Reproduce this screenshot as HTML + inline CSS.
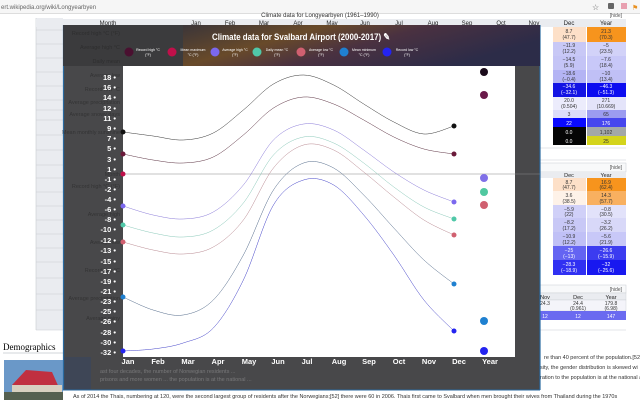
<!DOCTYPE html>
<html><head><meta charset="utf-8"><style>
html,body{margin:0;padding:0;width:640px;height:400px;overflow:hidden;background:#fff;font-family:"Liberation Sans",sans-serif}
svg{display:block}
</style></head><body>
<svg id="s" width="640" height="400" viewBox="0 0 640 400" xmlns="http://www.w3.org/2000/svg" font-family="Liberation Sans, sans-serif">
<rect x="0" y="0" width="640" height="13" fill="#f6f6f6"/>
<text x="1" y="9" font-size="6" fill="#666">ert.wikipedia.org/wiki/Longyearbyen</text>
<text x="592" y="10" font-size="8" fill="#555">☆</text>
<rect x="608" y="3" width="6" height="6" rx="1" fill="#666"/>
<rect x="621" y="3" width="6" height="6" fill="#e8a0b0"/>
<text x="632" y="10" font-size="7" fill="#e89020">⚑</text>
<rect x="0" y="13" width="640" height="1" fill="#ddd"/>
<rect x="36" y="18" width="27" height="312" fill="#eaecf0"/>
<g stroke="#c8ccd1" stroke-width="0.6">
<line x1="36" y1="18" x2="36" y2="330"/>
<line x1="36" y1="30" x2="63" y2="30"/><line x1="36" y1="44" x2="63" y2="44"/><line x1="36" y1="58" x2="63" y2="58"/><line x1="36" y1="72" x2="63" y2="72"/><line x1="36" y1="86" x2="63" y2="86"/><line x1="36" y1="100" x2="63" y2="100"/><line x1="36" y1="110" x2="63" y2="110"/><line x1="36" y1="120" x2="63" y2="120"/><line x1="36" y1="135" x2="63" y2="135"/><line x1="36" y1="150" x2="63" y2="150"/><line x1="36" y1="165" x2="63" y2="165"/><line x1="36" y1="178" x2="63" y2="178"/><line x1="36" y1="192" x2="63" y2="192"/><line x1="36" y1="206" x2="63" y2="206"/><line x1="36" y1="220" x2="63" y2="220"/><line x1="36" y1="234" x2="63" y2="234"/><line x1="36" y1="248" x2="63" y2="248"/><line x1="36" y1="262" x2="63" y2="262"/><line x1="36" y1="278" x2="63" y2="278"/><line x1="36" y1="294" x2="63" y2="294"/><line x1="36" y1="310" x2="63" y2="310"/><line x1="36" y1="330" x2="63" y2="330"/>
</g>
<text x="320" y="17" font-size="6" fill="#333" text-anchor="middle">Climate data for Longyearbyen (1961–1990)</text>
<rect x="36" y="19" width="590" height="8" fill="#eaecf0"/>
<g font-size="6" fill="#222" text-anchor="middle"><text x="108" y="25">Month</text><text x="196" y="25">Jan</text><text x="230" y="25">Feb</text><text x="264" y="25">Mar</text><text x="298" y="25">Apr</text><text x="332" y="25">May</text><text x="365" y="25">Jun</text><text x="399" y="25">Jul</text><text x="433" y="25">Aug</text><text x="467" y="25">Sep</text><text x="501" y="25">Oct</text><text x="534" y="25">Nov</text><text x="569" y="25">Dec</text><text x="606" y="25">Year</text></g>
<text x="622" y="17" font-size="5" fill="#555" text-anchor="end">[hide]</text>
<g>
<rect x="553" y="27" width="33" height="15" fill="#fde0c8"/><rect x="587" y="27" width="39" height="15" fill="#f7941d"/>
<rect x="553" y="42" width="33" height="14" fill="#c8c8f6"/><rect x="587" y="42" width="39" height="14" fill="#d2d2f8"/>
<rect x="553" y="56" width="33" height="14" fill="#c4c4f6"/><rect x="587" y="56" width="39" height="14" fill="#c8c8f8"/>
<rect x="553" y="70" width="33" height="13" fill="#b4b4f4"/><rect x="587" y="70" width="39" height="13" fill="#c0c0f6"/>
<rect x="553" y="83" width="33" height="14" fill="#1414e4"/><rect x="587" y="83" width="39" height="14" fill="#0c0cf0"/>
<rect x="553" y="97" width="33" height="13" fill="#ececfc"/><rect x="587" y="97" width="39" height="13" fill="#e4e4fa"/>
<rect x="553" y="110" width="33" height="8" fill="#dcdcfa"/><rect x="587" y="110" width="39" height="8" fill="#9c9cf0"/>
<rect x="553" y="118" width="33" height="9" fill="#0a0aff"/><rect x="587" y="118" width="39" height="9" fill="#4646ee"/>
<rect x="553" y="127" width="33" height="9" fill="#050505"/><rect x="587" y="127" width="39" height="9" fill="#a3a8a8"/>
<rect x="553" y="136" width="33" height="9" fill="#050505"/><rect x="587" y="136" width="39" height="9" fill="#d4d41c"/>
</g>
<g font-size="5" text-anchor="middle" fill="#333">
<text x="569" y="33">8.7</text><text x="569" y="39">(47.7)</text><text x="606" y="33">21.3</text><text x="606" y="39">(70.3)</text>
<text x="569" y="47">−11.9</text><text x="569" y="53">(12.2)</text><text x="606" y="47">−5</text><text x="606" y="53">(23.5)</text>
<text x="569" y="61">−14.5</text><text x="569" y="67">(5.9)</text><text x="606" y="61">−7.6</text><text x="606" y="67">(18.4)</text>
<text x="569" y="75">−18.6</text><text x="569" y="81">(−0.4)</text><text x="606" y="75">−10</text><text x="606" y="81">(13.4)</text>
<text x="569" y="88" fill="#fff">−34.6</text><text x="569" y="94" fill="#fff">(−32.1)</text><text x="606" y="88" fill="#fff">−46.3</text><text x="606" y="94" fill="#fff">(−51.3)</text>
<text x="569" y="102">20.0</text><text x="569" y="108">(0.504)</text><text x="606" y="102">271</text><text x="606" y="108">(10.669)</text>
<text x="569" y="116">3</text><text x="606" y="116">65</text>
<text x="569" y="125" fill="#fff">22</text><text x="606" y="125" fill="#fff">176</text>
<text x="569" y="134" fill="#fff">0.0</text><text x="606" y="134">1,102</text>
<text x="569" y="143" fill="#fff">0.0</text><text x="606" y="143">25</text>
</g>
<line x1="540" y1="148" x2="626" y2="148" stroke="#c8ccd1" stroke-width="0.6"/>
<line x1="540" y1="160" x2="626" y2="160" stroke="#c8ccd1" stroke-width="0.6"/>
<rect x="540" y="163" width="86" height="9" fill="#f8f9fa" stroke="#c8ccd1" stroke-width="0.5"/>
<text x="622" y="169" font-size="5" fill="#555" text-anchor="end">[hide]</text>
<rect x="540" y="172" width="86" height="6" fill="#eaecf0"/>
<g font-size="5.5" text-anchor="middle" fill="#222"><text x="569" y="177">Dec</text><text x="606" y="177">Year</text></g>
<g>
<rect x="553" y="178" width="33" height="13" fill="#fde0c8"/><rect x="587" y="178" width="39" height="13" fill="#f7941d"/>
<rect x="553" y="191" width="33" height="14" fill="#fef2e8"/><rect x="587" y="191" width="39" height="14" fill="#f8b060"/>
<rect x="553" y="205" width="33" height="13" fill="#d0d0f8"/><rect x="587" y="205" width="39" height="13" fill="#e2e2fa"/>
<rect x="553" y="218" width="33" height="14" fill="#c8c8f6"/><rect x="587" y="218" width="39" height="14" fill="#d8d8f8"/>
<rect x="553" y="232" width="33" height="14" fill="#c0c0f6"/><rect x="587" y="232" width="39" height="14" fill="#c8c8f8"/>
<rect x="553" y="246" width="33" height="14" fill="#6464f2"/><rect x="587" y="246" width="39" height="14" fill="#3c3cf0"/>
<rect x="553" y="260" width="33" height="15" fill="#3030f2"/><rect x="587" y="260" width="39" height="15" fill="#1818f0"/>
</g>
<g font-size="5" text-anchor="middle" fill="#333">
<text x="569" y="184">8.7</text><text x="569" y="189">(47.7)</text><text x="606" y="184">16.9</text><text x="606" y="189">(62.4)</text>
<text x="569" y="197">3.6</text><text x="569" y="203">(38.5)</text><text x="606" y="197">14.3</text><text x="606" y="203">(57.7)</text>
<text x="569" y="211">−5.9</text><text x="569" y="216">(22)</text><text x="606" y="211">−0.8</text><text x="606" y="216">(30.5)</text>
<text x="569" y="224">−8.2</text><text x="569" y="230">(17.2)</text><text x="606" y="224">−3.2</text><text x="606" y="230">(26.2)</text>
<text x="569" y="238">−10.9</text><text x="569" y="244">(12.2)</text><text x="606" y="238">−5.6</text><text x="606" y="244">(21.9)</text>
<text x="569" y="252" fill="#fff">−25</text><text x="569" y="258" fill="#fff">(−13)</text><text x="606" y="252" fill="#fff">−26.6</text><text x="606" y="258" fill="#fff">(−15.9)</text>
<text x="569" y="266" fill="#fff">−28.3</text><text x="569" y="272" fill="#fff">(−18.9)</text><text x="606" y="266" fill="#fff">−32</text><text x="606" y="272" fill="#fff">(−25.6)</text>
</g>
<rect x="540" y="285" width="86" height="8" fill="#f8f9fa" stroke="#c8ccd1" stroke-width="0.5"/>
<text x="622" y="291" font-size="5" fill="#555" text-anchor="end">[hide]</text>
<rect x="540" y="293" width="86" height="7" fill="#eaecf0" stroke="#c8ccd1" stroke-width="0.4"/>
<g font-size="5.5" text-anchor="middle" fill="#222"><text x="545" y="299">Nov</text><text x="578" y="299">Dec</text><text x="611" y="299">Year</text></g>
<rect x="540" y="300" width="86" height="11" fill="#f4f4fa" stroke="#c8ccd1" stroke-width="0.4"/>
<g font-size="5" text-anchor="middle" fill="#333"><text x="545" y="305">24.3</text><text x="578" y="305">24.4</text><text x="611" y="305">179.8</text><text x="578" y="310">(0.961)</text><text x="611" y="310">(6.98)</text></g>
<rect x="540" y="311" width="86" height="9" fill="#6a6af0"/>
<g font-size="5" text-anchor="middle" fill="#fff"><text x="545" y="318">12</text><text x="578" y="318">12</text><text x="611" y="318">147</text></g>
<line x1="540" y1="330" x2="626" y2="330" stroke="#c8ccd1" stroke-width="0.6"/>
<text x="3" y="350" font-family="Liberation Serif, serif" font-size="9" fill="#000">Demographics</text>
<line x1="3" y1="353" x2="63" y2="353" stroke="#a2a9b1" stroke-width="0.5"/>
<rect x="4" y="360" width="59" height="40" fill="#6a98c8"/>
<polygon points="12,385 26,370 52,372 60,390 12,395" fill="#c03040"/>
<rect x="12" y="385" width="50" height="15" fill="#d8d0c0"/>
<rect x="4" y="392" width="59" height="8" fill="#556050"/>
<g font-size="5.5" fill="#333">
<text x="544" y="359">re than 40 percent of the population.[52] is</text>
<text x="540" y="369">sity, the gender distribution is skewed wi</text>
<text x="540" y="379">ration to the population is at the national a</text>
<text x="73" y="398">As of 2014 the Thais, numbering at 120, were the second largest group of residents after the Norwegians;[52] there were 60 in 2006. Thais first came to Svalbard when men brought their wives from Thailand during the 1970s</text>
</g>
<rect x="63" y="25" width="477" height="365" fill="#3a3a3c" fill-opacity="0.93"/>
<rect x="63" y="357" width="28" height="33" fill="#3e4656"/>
<line x1="63.5" y1="25" x2="63.5" y2="390" stroke="#2a6aa0" stroke-width="1.2"/>
<line x1="540" y1="25" x2="540" y2="390" stroke="#2a6aa0" stroke-width="1.2"/>
<line x1="63" y1="390" x2="540" y2="390" stroke="#2a6aa0" stroke-width="1"/>
<defs><linearGradient id="hg" x1="0" y1="0" x2="1" y2="0.4"><stop offset="0" stop-color="#3a3438"/><stop offset="0.35" stop-color="#6a4a28"/><stop offset="0.6" stop-color="#4a3040"/><stop offset="1" stop-color="#2a2a48"/></linearGradient></defs>
<rect x="183" y="25" width="357" height="41" fill="url(#hg)" opacity="0.95"/>
<rect x="63" y="25" width="120" height="41" fill="#3a3a3c" opacity="0.9"/>
<text x="212" y="40" font-size="9.5" font-weight="bold" fill="#fff" textLength="178" lengthAdjust="spacingAndGlyphs">Climate data for Svalbard Airport (2000-2017) ✎</text>
<g font-size="5.5" fill="#222" fill-opacity="0.55" text-anchor="end">
<text x="120" y="35">Record high °C (°F)</text><text x="120" y="49">Average high °C</text><text x="120" y="63">Daily mean</text><text x="120" y="77">Average low</text><text x="120" y="91">Record low °C</text><text x="120" y="104">Average precipitation</text><text x="120" y="116">Average snowy days</text><text x="120" y="134">Mean monthly sunshine</text><text x="120" y="176">Month</text><text x="120" y="188">Record high °C (°F)</text><text x="120" y="216">Average high</text><text x="120" y="244">Average low</text><text x="120" y="272">Record low °C</text><text x="120" y="300">Average precipitation</text><text x="120" y="320">Average rainy</text>
</g>
<g font-size="3.5" fill="#fff" text-anchor="middle">
<circle cx="129" cy="52" r="4.5" fill="#4a1030"/><text x="148" y="51">Record high °C</text><text x="148" y="56">(°F)</text>
<circle cx="172" cy="52" r="4.5" fill="#c0104a"/><text x="193" y="51">Mean maximum</text><text x="193" y="56">°C (°F)</text>
<circle cx="215" cy="52" r="4.5" fill="#7b68ee"/><text x="235" y="51">Average high °C</text><text x="235" y="56">(°F)</text>
<circle cx="257" cy="52" r="4.5" fill="#50c8a8"/><text x="277" y="51">Daily mean °C</text><text x="277" y="56">(°F)</text>
<circle cx="301" cy="52" r="4.5" fill="#d06070"/><text x="321" y="51">Average low °C</text><text x="321" y="56">(°F)</text>
<circle cx="344" cy="52" r="4.5" fill="#1f80d0"/><text x="364" y="51">Mean minimum</text><text x="364" y="56">°C (°F)</text>
<circle cx="387" cy="52" r="4.5" fill="#2424f0"/><text x="407" y="51">Record low °C</text><text x="407" y="56">(°F)</text>
</g>
<rect x="123" y="66" width="392" height="291" fill="#fff"/>
<line x1="123" y1="174" x2="540" y2="174" stroke="#888" stroke-width="0.6"/>
<g id="curves" fill="none" stroke-width="0.5"></g>
<g id="yl" font-size="7.5" font-weight="bold" fill="#fff" text-anchor="end"></g>
<g font-size="7.5" font-weight="bold" fill="#fff" text-anchor="middle">
<text x="128" y="364">Jan</text><text x="158" y="364">Feb</text><text x="188" y="364">Mar</text><text x="218" y="364">Apr</text><text x="249" y="364">May</text><text x="278" y="364">Jun</text><text x="307" y="364">Jul</text><text x="339" y="364">Aug</text><text x="369" y="364">Sep</text><text x="399" y="364">Oct</text><text x="429" y="364">Nov</text><text x="459" y="364">Dec</text><text x="490" y="364">Year</text>
</g>
<g font-size="5.5" fill="#fff" fill-opacity="0.25"><text x="100" y="373">ast four decades, the number of Norwegian residents ...</text><text x="100" y="381">prisons  and  more  women ... the population is at the national ...</text></g>
</svg>
<script>
var ns="http://www.w3.org/2000/svg";
var data=[
["#333",[132,136,140,133,110,84,75,85,104,122,134,126],"#111",72,"#1a0a1a"],
["#5a3040",[154,160,163,157,135,108,97,104,120,137,149,154],"#6a1a3a",95,"#6a1a4a"],
["#8878d8",[206,215,219,212,185,140,124,130,150,172,190,202],"#7b68ee",178,"#8070e8"],
["#88c8b8",[225,233,237,230,203,155,137,143,163,187,207,219],"#50c8a8",192,"#50c8a0"],
["#b88890",[242,250,254,247,220,168,145,150,172,197,220,235],"#d06070",205,"#d06070"],
["#506888",[297,310,315,300,255,190,163,168,195,228,260,284],"#1f80d0",321,"#1f80d0"],
["#4040c8",[351,349,343,328,280,205,180,185,215,255,300,331],"#2424f0",351,"#2424f0"]];
var g=document.getElementById("curves");
function X(i){return 123+i*(454-123)/11;}
data.forEach(function(d){
 var p=d[1].map(function(y,i){return [X(i),y];});
 var s="M"+p[0][0]+","+p[0][1];
 for(var i=0;i<p.length-1;i++){
  var p0=p[i-1]||p[i],p1=p[i],p2=p[i+1],p3=p[i+2]||p2;
  var c1=[p1[0]+(p2[0]-p0[0])/6,p1[1]+(p2[1]-p0[1])/6];
  var c2=[p2[0]-(p3[0]-p1[0])/6,p2[1]-(p3[1]-p1[1])/6];
  s+=" C"+c1+" "+c2+" "+p2;
 }
 var pa=document.createElementNS(ns,"path");pa.setAttribute("d",s);pa.setAttribute("stroke",d[0]);g.appendChild(pa);
 [[123,d[1][0],2.5,d[2]],[454,d[1][11],2.5,d[2]],[484,d[3],4,d[4]]].forEach(function(c){
  var ci=document.createElementNS(ns,"circle");ci.setAttribute("cx",c[0]);ci.setAttribute("cy",c[1]);ci.setAttribute("r",c[2]);ci.setAttribute("fill",c[3]);g.appendChild(ci);});
});
var cr=document.createElementNS(ns,"circle");cr.setAttribute("cx",123);cr.setAttribute("cy",174);cr.setAttribute("r",2.5);cr.setAttribute("fill","#c0104a");g.appendChild(cr);
var yl=document.getElementById("yl");
var labs=[[18,77],[16,87],[14,97],[12,108],[11,118],[9,128],[7,138],[5,148],[3,159],[1,169],[-1,179],[-2,189],[-4,199],[-6,209],[-8,219],[-10,229],[-12,240],[-13,250],[-15,261],[-17,271],[-19,281],[-21,291],[-23,301],[-25,311],[-26,321],[-28,332],[-30,342],[-32,352]];
labs.forEach(function(l){var t=document.createElementNS(ns,"text");t.setAttribute("x",116);t.setAttribute("y",l[1]+3);t.textContent=l[0]+" •";yl.appendChild(t);});
</script>
</body></html>
